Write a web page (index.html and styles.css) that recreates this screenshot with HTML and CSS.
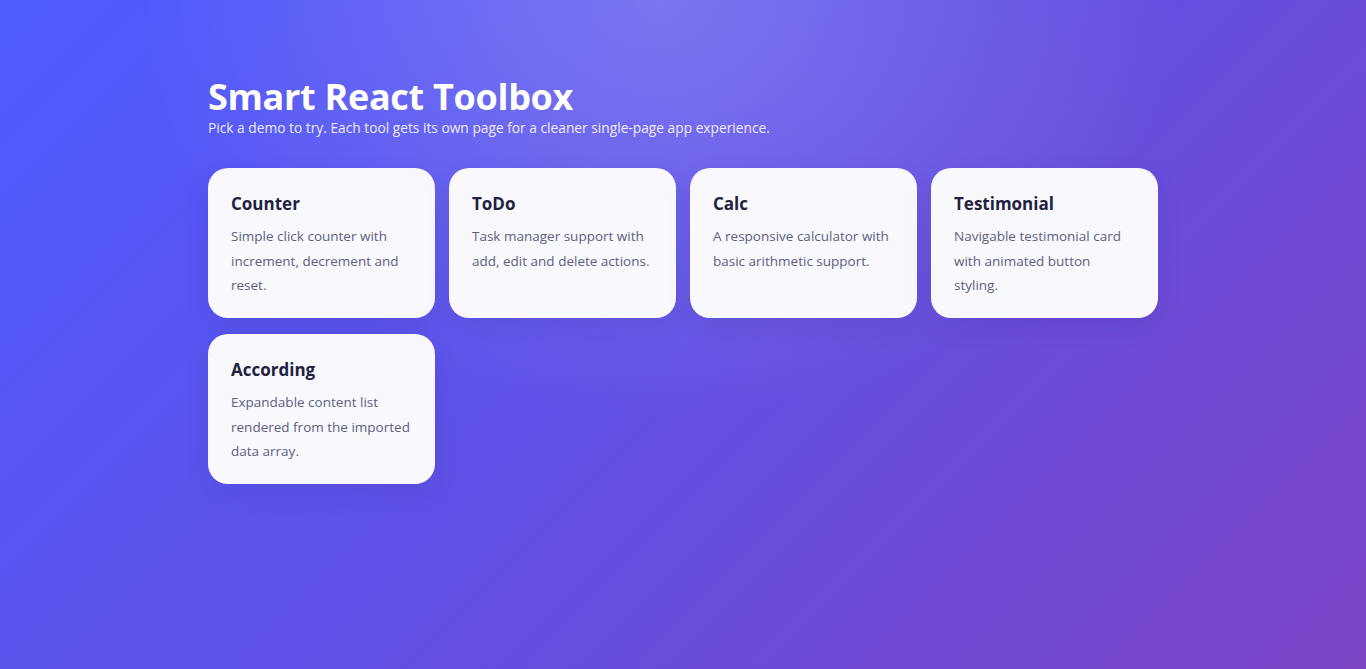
FILE: index.html
```html
<!DOCTYPE html>
<html lang="en">
<head>
  <meta charset="UTF-8">
  <meta name="viewport" content="width=device-width, initial-scale=1.0">
  <title>Smart React Toolbox</title>
  <link rel="stylesheet" href="styles.css">
</head>
<body>
  <main class="home">
    <header class="home-header">
      <h1>Smart React Toolbox</h1>
      <p>Pick a demo to try. Each tool gets its own page for a cleaner single-page app experience.</p>
    </header>

    <section class="tool-grid">
      <a class="tool-card" href="#counter">
        <h2>Counter</h2>
        <p>Simple click counter with increment, decrement and reset.</p>
      </a>
      <a class="tool-card" href="#todo">
        <h2>ToDo</h2>
        <p>Task manager support with add, edit and delete actions.</p>
      </a>
      <a class="tool-card" href="#calc">
        <h2>Calc</h2>
        <p>A responsive calculator with basic arithmetic support.</p>
      </a>
      <a class="tool-card" href="#testimonial">
        <h2>Testimonial</h2>
        <p>Navigable testimonial card with animated button styling.</p>
      </a>
      <a class="tool-card" href="#according">
        <h2>According</h2>
        <p>Expandable content list rendered from the imported data array.</p>
      </a>
    </section>
  </main>
</body>
</html>
```

FILE: styles.css
```css
* { box-sizing: border-box; }

body {
  margin: 0;
  min-height: 100vh;
  font-family: "Open Sans", "Noto Sans", sans-serif;
  color: #fff;
  background:
    radial-gradient(ellipse 520px 420px at 660px 0, rgba(255, 255, 255, 0.2), rgba(255, 255, 255, 0) 100%),
    linear-gradient(135deg, #4d5bff 0%, #6150e4 50%, #7c45c6 100%);
}

.home {
  max-width: 950px;
  margin: 0 auto;
  padding-top: 76px;
}

.home-header h1 {
  margin: 0;
  font-size: 36px;
  font-weight: 700;
  line-height: 42px;
  letter-spacing: -0.3px;
}

.home-header p {
  margin: 0;
  font-size: 13.75px;
  line-height: 20px;
  color: rgba(255, 255, 255, 0.9);
}

.tool-grid {
  display: grid;
  grid-template-columns: repeat(4, 1fr);
  column-gap: 14px;
  row-gap: 16px;
  margin-top: 30px;
}

.tool-card {
  display: block;
  height: 150px;
  padding: 24px 22px 20px 23px;
  background: #f8f8fd;
  border-radius: 20px;
  text-decoration: none;
  box-shadow: 0 10px 24px rgba(40, 30, 120, 0.1);
}

.tool-card h2 {
  margin: 0 0 8px;
  font-size: 17px;
  line-height: 24px;
  font-weight: 700;
  color: #1f2240;
}

.tool-card p {
  margin: 0;
  font-size: 13.5px;
  line-height: 24.5px;
  color: #5d6180;
}
```
